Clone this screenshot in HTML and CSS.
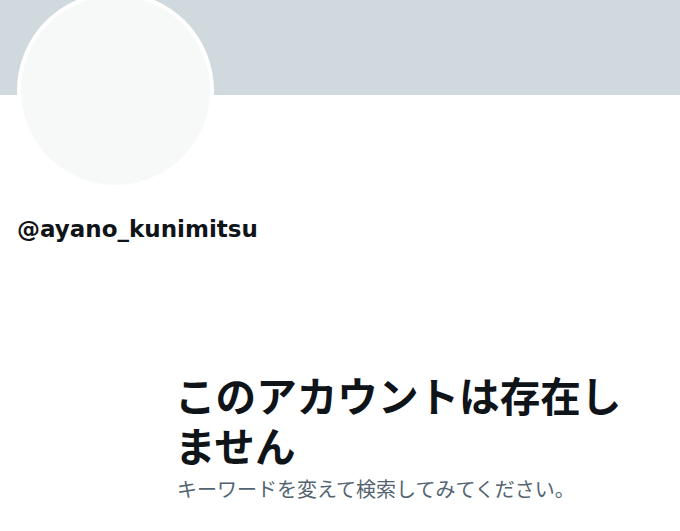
FILE: index.html
```html
<!DOCTYPE html>
<html lang="ja">
<head>
<meta charset="utf-8">
<link rel="stylesheet" href="styles.css">
</head>
<body>
<div class="page">
  <div class="banner"></div>
  <div class="profile">
    <div class="avatar"></div>
    <div class="handle">@ayano_kunimitsu</div>
  </div>
  <div class="empty">
    <h1 class="title">このアカウントは存在しません</h1>
    <p class="sub">キーワードを変えて検索してみてください。</p>
  </div>
</div>
</body>
</html>
```
FILE: styles.css
```css
html, body {
  margin: 0;
  padding: 0;
  background: #ffffff;
}
.page {
  width: 680px;
  height: 531px;
  overflow: hidden;
  font-family: "DejaVu Sans", "Noto Sans CJK JP", sans-serif;
  color: #0f1419;
}
.banner {
  height: 95px;
  background: #cfd9de;
}
.profile {
  padding-left: 17px;
}
.avatar {
  width: 189px;
  height: 189px;
  margin-top: -103px;
  border-radius: 50%;
  background: #f7f9f9;
  border: 4px solid #ffffff;
}
.handle {
  margin-top: 27px;
  font-size: 23px;
  font-weight: 700;
  line-height: 26px;
}
.empty {
  padding-left: 175px;
  padding-top: 128px;
  width: 460px;
}
.title {
  margin: 0;
  font-family: "Noto Sans CJK JP", sans-serif;
  font-size: 40.6px;
  font-weight: 700;
  line-height: 50px;
}
.sub {
  margin: 6px 0 0;
  padding-left: 2px;
  font-family: "Noto Sans CJK JP", sans-serif;
  font-size: 20px;
  line-height: 26px;
  color: #536471;
}
```
